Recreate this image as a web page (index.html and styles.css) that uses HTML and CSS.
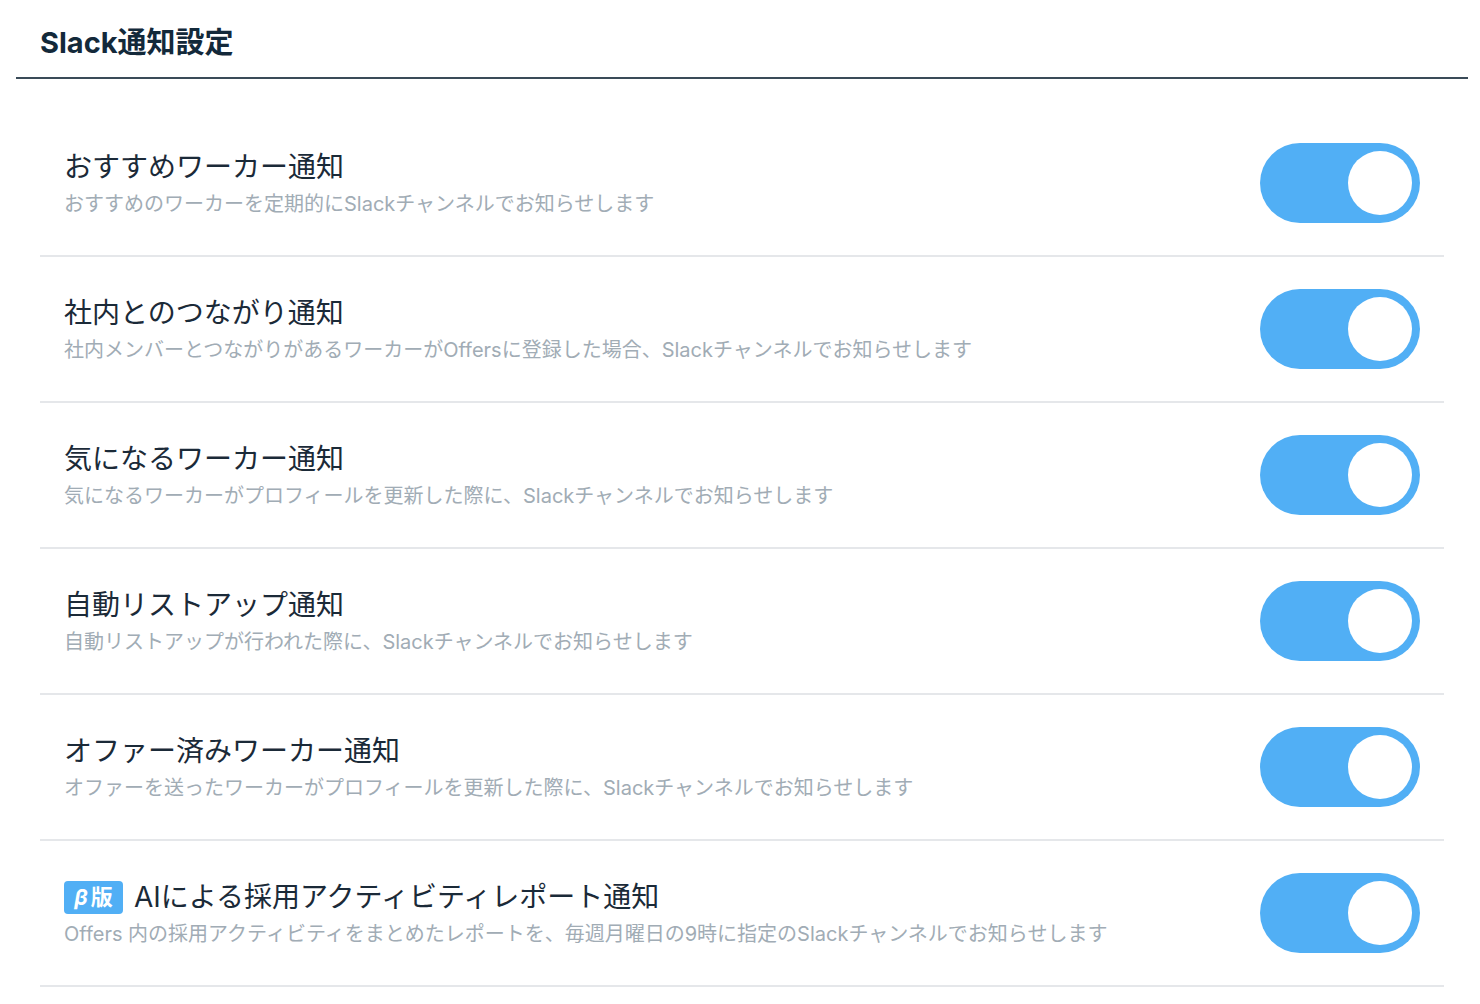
FILE: index.html
```html
<!DOCTYPE html>
<html lang="ja">
<head>
    <meta charset="UTF-8">
    <meta name="viewport" content="width=device-width, initial-scale=1.0">
    <title>Slack通知設定</title>
    <link rel="stylesheet" href="styles.css">
</head>
<body>

<section class="settings">
    <header class="settings-header">
        <h1>Slack通知設定</h1>
    </header>

    <ul class="notify-list">
        <li class="notify-row">
            <div class="notify-text">
                <p class="notify-title">おすすめワーカー通知</p>
                <p class="notify-desc">おすすめのワーカーを定期的にSlackチャンネルでお知らせします</p>
            </div>
            <label class="switch"><input type="checkbox" checked><span class="switch-track"><span class="switch-knob"></span></span></label>
        </li>
        <li class="notify-row">
            <div class="notify-text">
                <p class="notify-title">社内とのつながり通知</p>
                <p class="notify-desc">社内メンバーとつながりがあるワーカーがOffersに登録した場合、Slackチャンネルでお知らせします</p>
            </div>
            <label class="switch"><input type="checkbox" checked><span class="switch-track"><span class="switch-knob"></span></span></label>
        </li>
        <li class="notify-row">
            <div class="notify-text">
                <p class="notify-title">気になるワーカー通知</p>
                <p class="notify-desc">気になるワーカーがプロフィールを更新した際に、Slackチャンネルでお知らせします</p>
            </div>
            <label class="switch"><input type="checkbox" checked><span class="switch-track"><span class="switch-knob"></span></span></label>
        </li>
        <li class="notify-row">
            <div class="notify-text">
                <p class="notify-title">自動リストアップ通知</p>
                <p class="notify-desc">自動リストアップが行われた際に、Slackチャンネルでお知らせします</p>
            </div>
            <label class="switch"><input type="checkbox" checked><span class="switch-track"><span class="switch-knob"></span></span></label>
        </li>
        <li class="notify-row">
            <div class="notify-text">
                <p class="notify-title">オファー済みワーカー通知</p>
                <p class="notify-desc">オファーを送ったワーカーがプロフィールを更新した際に、Slackチャンネルでお知らせします</p>
            </div>
            <label class="switch"><input type="checkbox" checked><span class="switch-track"><span class="switch-knob"></span></span></label>
        </li>
        <li class="notify-row">
            <div class="notify-text">
                <p class="notify-title"><span class="beta-badge"><i>β</i>版</span>AIによる採用アクティビティレポート通知</p>
                <p class="notify-desc">Offers 内の採用アクティビティをまとめたレポートを、毎週月曜日の9時に指定のSlackチャンネルでお知らせします</p>
            </div>
            <label class="switch"><input type="checkbox" checked><span class="switch-track"><span class="switch-knob"></span></span></label>
        </li>
    </ul>
</section>

</body>
</html>
```

FILE: styles.css
```css
* {
    margin: 0;
    padding: 0;
    box-sizing: border-box;
}

html, body {
    background: #fff;
    font-family: Inter, "Noto Sans CJK JP", sans-serif;
    color: #1b2a38;
}

.settings {
    margin: 0 12px 0 16px;
}

.settings-header {
    padding: 22px 24px 13px;
    border-bottom: 2px solid #3a4b58;
}

.settings-header h1 {
    font-size: 29px;
    font-weight: 700;
    line-height: 42px;
    color: #13293a;
}

.notify-list {
    list-style: none;
    margin: 32px 24px 0;
}

.notify-row {
    display: flex;
    align-items: center;
    justify-content: space-between;
    padding: 32px 24px;
    border-bottom: 2px solid #e5e7ea;
}

.notify-text {
    display: flex;
    flex-direction: column;
    gap: 4px;
}

.notify-title {
    display: flex;
    align-items: center;
    font-size: 28px;
    line-height: 38px;
    color: #1b2a38;
}

.notify-desc {
    font-size: 20px;
    line-height: 28px;
    color: #a1acb5;
}

.beta-badge {
    display: inline-flex;
    align-items: center;
    justify-content: center;
    width: 59px;
    height: 33px;
    margin-right: 11px;
    border-radius: 4px;
    background-color: #51aff5;
    color: #fff;
    font-size: 22px;
    font-weight: 700;
    line-height: 1;
}

.beta-badge i {
    margin-right: 3px;
}

/* toggle switch */
.switch input {
    display: none;
}

.switch-track {
    display: flex;
    align-items: center;
    justify-content: flex-start;
    width: 160px;
    height: 80px;
    padding: 8px;
    border-radius: 40px;
    background-color: #cfd6dc;
    cursor: pointer;
    transition: background-color 0.2s ease;
}

.switch-knob {
    width: 64px;
    height: 64px;
    border-radius: 50%;
    background-color: #fff;
}

.switch input:checked + .switch-track {
    background-color: #51aff5;
    justify-content: flex-end;
}
```
